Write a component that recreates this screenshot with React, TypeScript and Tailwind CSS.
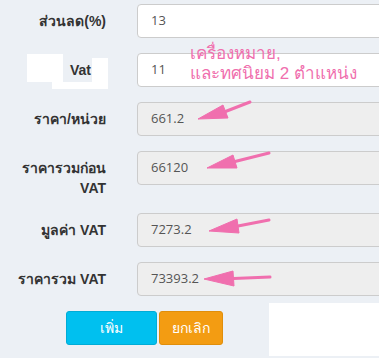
import React from 'react';

type Row = {
  label: React.ReactNode;
  value: string;
  disabled?: boolean;
};

const rows: Row[] = [
  { label: 'ส่วนลด(%)', value: '13' },
  { label: <span className="pr-[15px]">Vat</span>, value: '11' },
  { label: 'ราคา/หน่วย', value: '661.2', disabled: true },
  { label: <>ราคารวมก่อน<br />VAT</>, value: '66120', disabled: true },
  { label: 'มูลค่า VAT', value: '7273.2', disabled: true },
  { label: 'ราคารวม VAT', value: '73393.2', disabled: true },
];

function Arrow({ x1, y1, x2, y2, b1, b2 }: { x1: number; y1: number; x2: number; y2: number; b1: [number, number]; b2: [number, number] }) {
  const mx = (b1[0] + b2[0]) / 2;
  const my = (b1[1] + b2[1]) / 2;
  return (
    <g fill="#f06fae" stroke="#f06fae">
      <line x1={x1} y1={y1} x2={mx} y2={my} strokeWidth={3} strokeLinecap="round" />
      <polygon points={`${x2},${y2} ${b1[0]},${b1[1]} ${b2[0]},${b2[1]}`} strokeWidth={1} strokeLinejoin="round" />
    </g>
  );
}

export default function App() {
  return (
    <div className="relative w-[379px] h-[358px] overflow-hidden bg-[#ecf0f5] text-[#333] font-['Liberation_Sans','Noto_Sans',sans-serif]">
      <div className="pt-[4px]">
        {rows.map((row, idx) => (
          <div key={idx} className="flex items-start mb-[15px]">
            <div className="w-[106px] shrink-0 text-right text-[14px] font-bold leading-5 pt-[7px]">
              {row.label}
            </div>
            <div
              className={`ml-[31px] w-[260px] shrink-0 h-[34px] border border-[#ccc] rounded-[4px] px-[13px] flex items-center text-[13px] text-[#555] font-['Open_Sans',sans-serif] ${row.disabled ? 'bg-[#eee]' : 'bg-white'}`}
            >
              {row.value}
            </div>
          </div>
        ))}

        {/* Buttons */}
        <div className="flex gap-[2px] ml-[66px] mt-[1px]">
          <button className="w-[91px] h-[34px] rounded-[3px] bg-[#00c0ef] border border-[#00acd6] text-white text-[14px] font-medium">
            เพิ่ม
          </button>
          <button className="w-[64px] h-[34px] rounded-[3px] bg-[#f39c12] border border-[#e08e0b] text-white text-[14px] font-medium">
            ยกเลิก
          </button>
        </div>
      </div>

      {/* Redaction patches */}
      <div className="absolute left-[27px] top-[54px] w-[36px] h-[28px] bg-white"></div>
      <div className="absolute left-[52px] top-[82px] w-[40px] h-[7px] bg-white"></div>
      <div className="absolute left-[92px] top-[58px] w-[16px] h-[31px] bg-white"></div>
      <div className="absolute left-[269px] top-[303px] w-[110px] h-[53px] bg-white"></div>

      {/* Annotation */}
      <div className="absolute left-[190px] top-[44px] text-[17px] leading-[20px] text-[#f06fae]">
        เครื่องหมาย,
        <br />
        และทศนิยม 2 ตำแหน่ง
      </div>
      <svg className="absolute inset-0 pointer-events-none" width="379" height="358">
        <Arrow x1={250} y1={102} x2={198} y2={119} b1={[223, 105]} b2={[228, 118]} />
        <Arrow x1={269} y1={153} x2={207} y2={168} b1={[233, 155]} b2={[237, 168]} />
        <Arrow x1={269} y1={220} x2={209} y2={231} b1={[237, 219]} b2={[239, 233]} />
        <Arrow x1={270} y1={277} x2={204} y2={279} b1={[233, 271]} b2={[234, 286]} />
      </svg>
    </div>
  );
}
